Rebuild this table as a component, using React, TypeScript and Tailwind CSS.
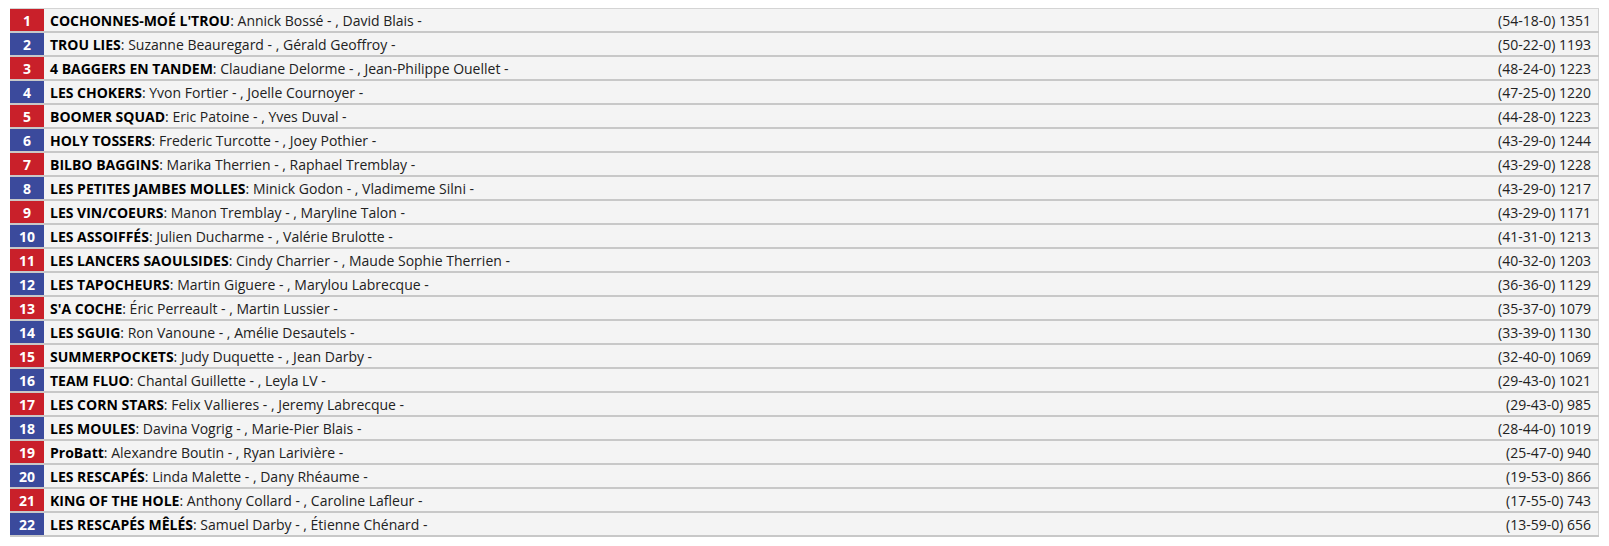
const teams = [
  ["COCHONNES-MOÉ L'TROU", "Annick Bossé - , David Blais -", "(54-18-0) 1351"],
  ["TROU LIES", "Suzanne Beauregard - , Gérald Geoffroy -", "(50-22-0) 1193"],
  ["4 BAGGERS EN TANDEM", "Claudiane Delorme - , Jean-Philippe Ouellet -", "(48-24-0) 1223"],
  ["LES CHOKERS", "Yvon Fortier - , Joelle Cournoyer -", "(47-25-0) 1220"],
  ["BOOMER SQUAD", "Eric Patoine - , Yves Duval -", "(44-28-0) 1223"],
  ["HOLY TOSSERS", "Frederic Turcotte - , Joey Pothier -", "(43-29-0) 1244"],
  ["BILBO BAGGINS", "Marika Therrien - , Raphael Tremblay -", "(43-29-0) 1228"],
  ["LES PETITES JAMBES MOLLES", "Minick Godon - , Vladimeme Silni -", "(43-29-0) 1217"],
  ["LES VIN/COEURS", "Manon Tremblay - , Maryline Talon -", "(43-29-0) 1171"],
  ["LES ASSOIFFÉS", "Julien Ducharme - , Valérie Brulotte -", "(41-31-0) 1213"],
  ["LES LANCERS SAOULSIDES", "Cindy Charrier - , Maude Sophie Therrien -", "(40-32-0) 1203"],
  ["LES TAPOCHEURS", "Martin Giguere - , Marylou Labrecque -", "(36-36-0) 1129"],
  ["S'A COCHE", "Éric Perreault - , Martin Lussier -", "(35-37-0) 1079"],
  ["LES SGUIG", "Ron Vanoune - , Amélie Desautels -", "(33-39-0) 1130"],
  ["SUMMERPOCKETS", "Judy Duquette - , Jean Darby -", "(32-40-0) 1069"],
  ["TEAM FLUO", "Chantal Guillette - , Leyla LV -", "(29-43-0) 1021"],
  ["LES CORN STARS", "Felix Vallieres - , Jeremy Labrecque -", "(29-43-0) 985"],
  ["LES MOULES", "Davina Vogrig - , Marie-Pier Blais -", "(28-44-0) 1019"],
  ["ProBatt", "Alexandre Boutin - , Ryan Larivière -", "(25-47-0) 940"],
  ["LES RESCAPÉS", "Linda Malette - , Dany Rhéaume -", "(19-53-0) 866"],
  ["KING OF THE HOLE", "Anthony Collard - , Caroline Lafleur -", "(17-55-0) 743"],
  ["LES RESCAPÉS MÊLÉS", "Samuel Darby - , Étienne Chénard -", "(13-59-0) 656"],
];

export default function App() {
  return (
    <div className="bg-white px-[10px] pt-[8px]" style={{ fontFamily: '"Open Sans", sans-serif' }}>
      <div className="border-t border-[#d4d4d4]">
        {teams.map(([name, players, record], i) => (
          <div key={i} className="flex h-[24px] border-b-2 border-[#c8c8c8] bg-[#f4f4f4] text-[14px] text-[#222]">
            <div
              className={
                "flex w-[34px] shrink-0 items-center justify-center font-bold text-white " +
                (i % 2 === 0 ? "bg-[#c9202a]" : "bg-[#3b4a9c]")
              }
            >
              {i + 1}
            </div>
            <div className="flex flex-1 items-center pl-[6px]">
              <span className="font-bold text-black">{name}</span>
              <span>: {players}</span>
            </div>
            <div className="flex items-center pr-[7px] border-r border-[#d4d4d4]">{record}</div>
          </div>
        ))}
      </div>
    </div>
  );
}
